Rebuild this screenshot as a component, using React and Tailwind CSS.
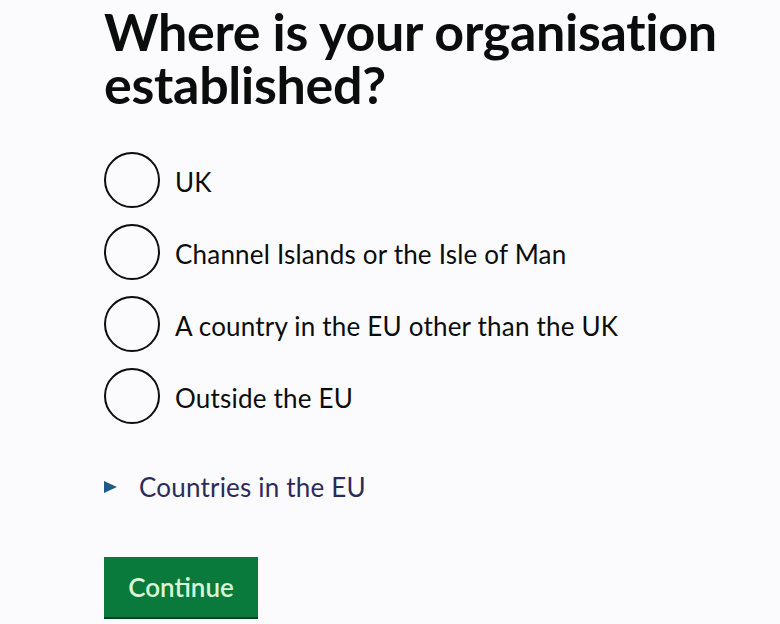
import { useState } from 'react';

const OPTIONS = [
  'UK',
  'Channel Islands or the Isle of Man',
  'A country in the EU other than the UK',
  'Outside the EU',
];

export default function App() {
  const [picked, setPicked] = useState(null);

  return (
    <div className="min-h-[624px] bg-[#fbfbfd] pl-[104px] pt-[5px] text-[#0b0c0c] font-['Lato','Liberation_Sans',sans-serif]">
      <h1 className="text-[52px] leading-[53px] font-bold tracking-[-0.3px]">
        Where is your organisation
        <br />
        established?
      </h1>

      {/* radios */}
      <div className="mt-[41px] flex flex-col gap-[16px]">
        {OPTIONS.map((opt, i) => (
          <label key={opt} className="flex items-center gap-[15px] cursor-pointer" onClick={() => setPicked(i)}>
            <span className="w-[56px] h-[56px] rounded-full border-2 border-[#0b0c0c] flex items-center justify-center shrink-0">
              {picked === i && <span className="w-[28px] h-[28px] rounded-full bg-[#0b0c0c]" />}
            </span>
            <span className="text-[26px] leading-none tracking-[0.2px] pt-[4px]">{opt}</span>
          </label>
        ))}
      </div>

      {/* details */}
      <div className="mt-[50px] flex items-center gap-[22px]">
        <svg width="13" height="12" viewBox="0 0 13 12" className="shrink-0">
          <polygon points="0,0 13,6 0,12" fill="#1f5b8a" />
        </svg>
        <span className="text-[26px] leading-none text-[#2b2a5c] tracking-[0.2px]">Countries in the EU</span>
      </div>

      <button className="mt-[57px] w-[154px] h-[60px] bg-[#0a7a3c] shadow-[0_2px_0_#00401f] text-[#d6f7d6] text-[26px] font-semibold">
        Continue
      </button>
    </div>
  );
}
